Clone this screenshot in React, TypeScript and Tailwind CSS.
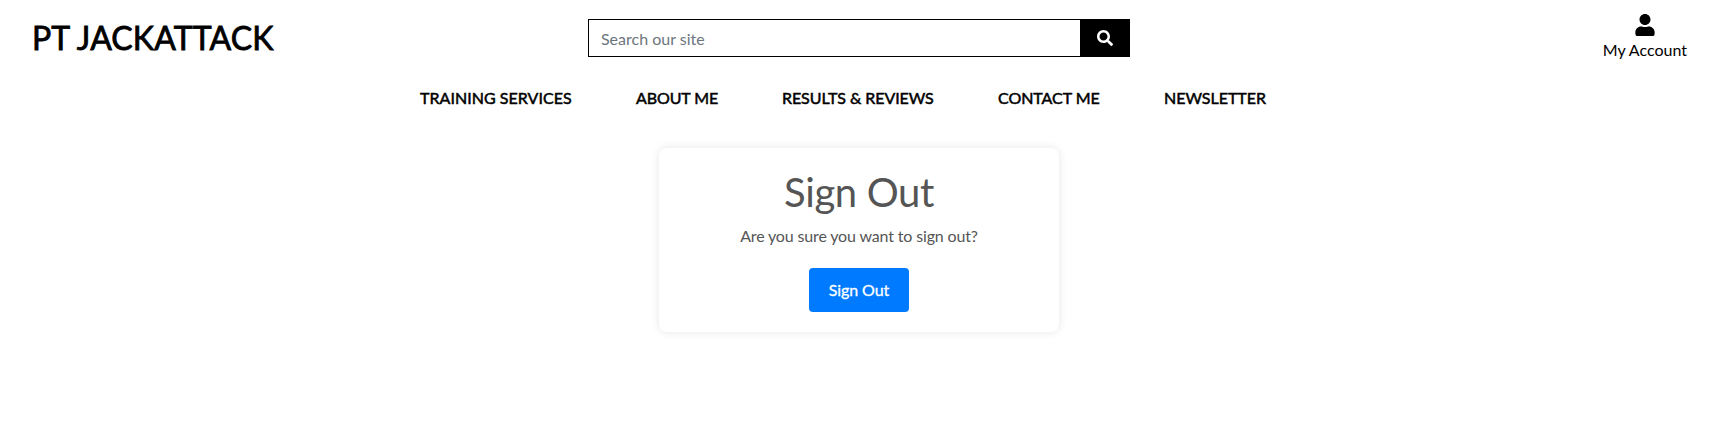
import { FaSearch, FaUser } from "react-icons/fa";

const links = [
  { label: "TRAINING SERVICES", size: "w-[152px] tracking-[0.04px]" },
  { label: "ABOUT ME", size: "w-[82px] tracking-[-0.1px]" },
  { label: "RESULTS & REVIEWS", size: "w-[152px] tracking-[-0.08px]" },
  { label: "CONTACT ME", size: "w-[102px] tracking-[-0.05px]" },
  { label: "NEWSLETTER", size: "w-[103px] tracking-[-0.03px]" },
];

export default function App() {
  return (
    <div className="min-h-screen overflow-hidden bg-white font-['Lato',sans-serif] text-base text-black">
      <header className="grid h-[76px] grid-cols-3">
        <div className="pt-[19px] pl-8">
          <a href="#" className="text-[32px] leading-[38px] tracking-[0.13px] [-webkit-text-stroke:0.8px_black]">PT JACKATTACK</a>
        </div>
        <form className="mx-auto mt-[19px] flex h-[38px] w-[542px]">
          <input
            type="text"
            placeholder="Search our site"
            className="h-[38px] min-w-0 flex-1 border border-r-0 border-black px-3 text-base placeholder:text-[#6c757d]"
          />
          <button type="button" aria-label="Search" className="flex w-[50px] items-center justify-center bg-black text-white">
            <FaSearch />
          </button>
        </form>
        <a href="#" className="mt-[14px] mr-[31px] flex flex-col items-center justify-self-end leading-6">
          <FaUser className="size-[22px]" />
          <span className="mt-[2px] whitespace-nowrap">My Account</span>
        </a>
      </header>
      <nav className="mt-[10px] flex justify-center gap-16 pr-[31px] leading-6">
        {links.map(({ label, size }) => (
          <a key={label} href="#" className={`shrink-0 whitespace-nowrap [-webkit-text-stroke:0.5px_black] ${size}`}>{label}</a>
        ))}
      </nav>
      <main className="mx-auto mt-[38px] h-[184px] w-[400px] rounded-lg p-5 text-center text-[#555] shadow-[0_0_10px_rgba(0,0,0,0.1)]">
        <h1 className="mb-2 text-[40px] leading-[48px] tracking-[-0.35px]">Sign Out</h1>
        <p className="mb-5 leading-6 tracking-[-0.15px]">Are you sure you want to sign out?</p>
        <button type="button" className="h-11 w-[100px] rounded bg-[#007bff] leading-6 tracking-[-0.1px] text-white [-webkit-text-stroke:0.3px_white]">Sign Out</button>
      </main>
    </div>
  );
}
